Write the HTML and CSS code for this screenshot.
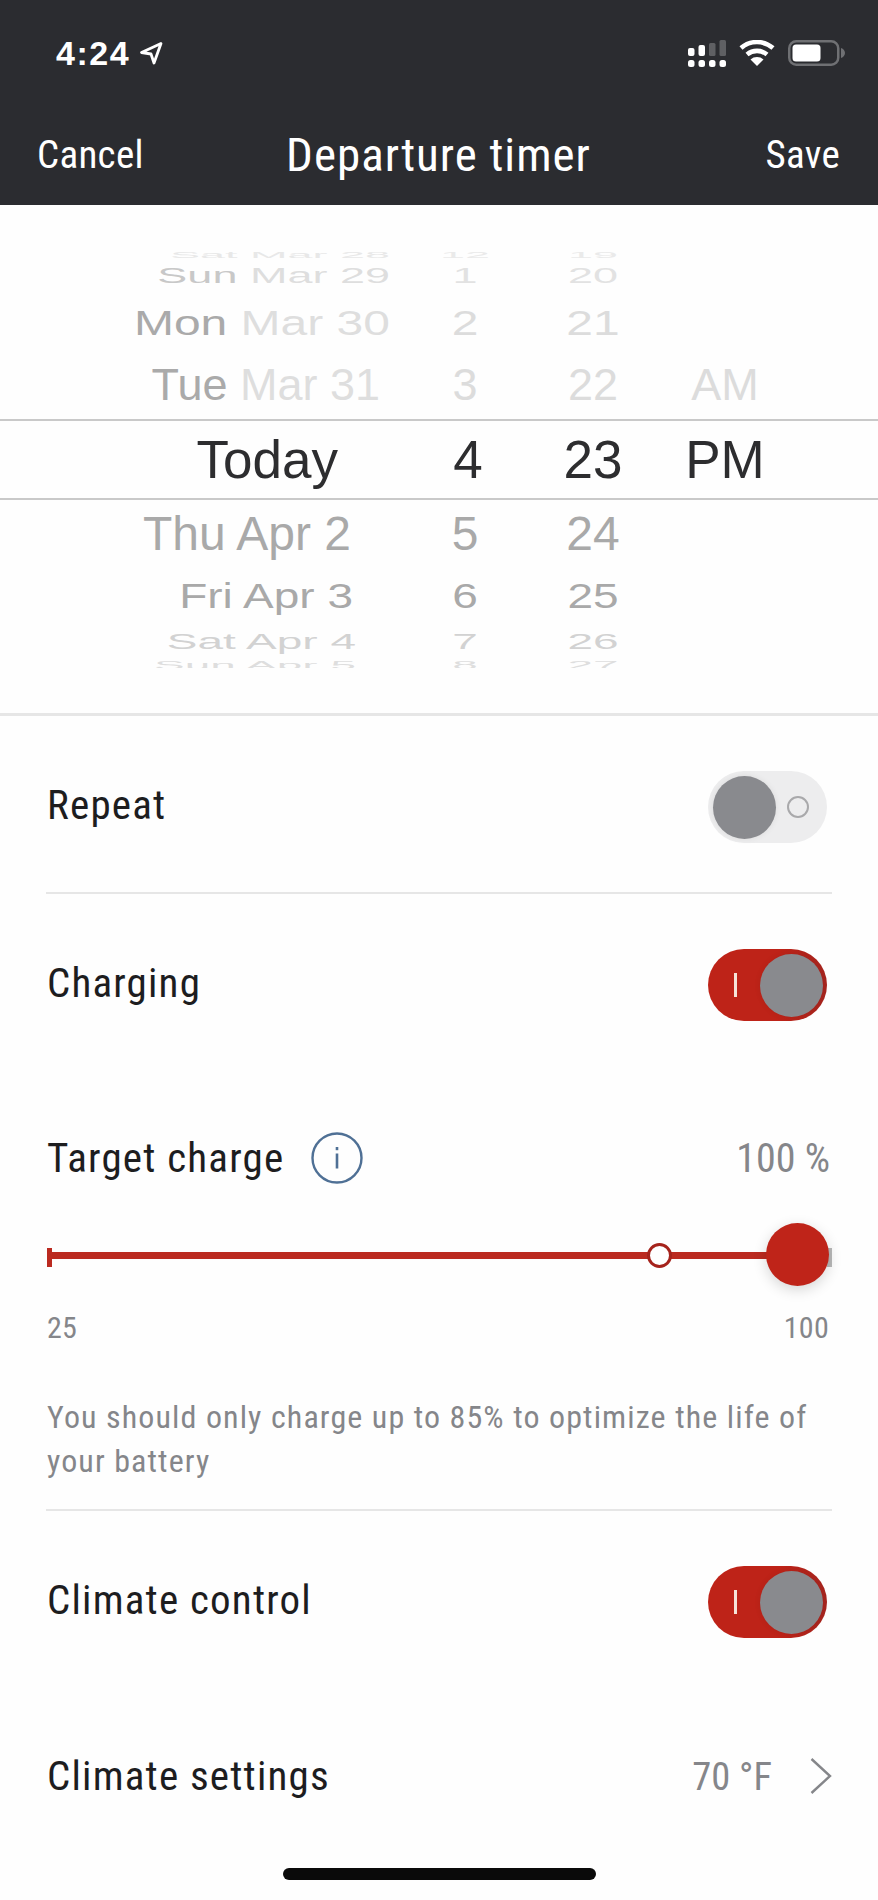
FILE: index.html
```html
<!DOCTYPE html>
<html lang="en">
<head>
    <meta charset="UTF-8">
    <meta name="viewport" content="width=device-width, initial-scale=1.0">
    <title>Departure timer</title>
    <link rel="stylesheet" href="styles.css">
</head>
<body>
    <header class="top">
        <div class="status">
            <div class="status-time">
                <span>4:24</span>
                <svg width="24" height="24" viewBox="0 0 24 24"><path d="M22 2.500 2.500 11.500l9.500 1.500 3 9z" fill="none" stroke="#fff" stroke-width="2.800" stroke-linejoin="round"/></svg>
            </div>
            <div class="status-icons">
                <svg width="38" height="27" viewBox="0 0 38 27">
                    <g fill="#fff">
                        <rect x="0" y="8" width="6.500" height="8" rx="2"/><rect x="10.500" y="5" width="6.500" height="11" rx="2"/>
                        <rect x="0" y="20" width="6.500" height="7" rx="2.500"/><rect x="10.500" y="20" width="6.500" height="7" rx="2.500"/>
                        <rect x="21" y="20" width="6.500" height="7" rx="2.500"/><rect x="31.500" y="20" width="6.500" height="7" rx="2.500"/>
                    </g>
                    <g fill="#5f6063"><rect x="21" y="3" width="6.500" height="13" rx="1.500"/><rect x="31.500" y="0" width="6.500" height="16" rx="1.500"/></g>
                </svg>
                <svg width="36" height="26" viewBox="0 0 36 26">
                    <path d="M18 26 11.500 19.500a10 10 0 0 1 13 0z" fill="#fff"/>
                    <path d="M8 14.500a15.500 15.500 0 0 1 20 0M2 8a24.500 24.500 0 0 1 32 0" fill="none" stroke="#fff" stroke-width="4.600"/>
                </svg>
                <svg width="57" height="26" viewBox="0 0 57 26">
                    <rect x="1.250" y="1.250" width="49" height="23.500" rx="7" fill="none" stroke="#6f7073" stroke-width="2.500"/>
                    <rect x="4.500" y="4.500" width="28" height="17" rx="3.500" fill="#fff"/>
                    <path d="M53 8c2.500 .8 4 2.800 4 5s-1.500 4.200-4 5z" fill="#6f7073"/>
                </svg>
            </div>
        </div>
        <nav class="nav">
            <a class="nav-link">Cancel</a>
            <h1 class="nav-title">Departure timer</h1>
            <a class="nav-link nav-save">Save</a>
        </nav>
    </header>

    <section class="picker">
        <div class="wheel">
            <div class="wheel-row edge-top"><div class="date date-edge"><span class="day">Sat</span> Mar 28</div><div class="num">12</div><div class="num">19</div><div class="num"></div></div>
            <div class="wheel-row far-top"><div class="date date-far"><span class="day">Sun</span> Mar 29</div><div class="num">1</div><div class="num">20</div><div class="num"></div></div>
            <div class="wheel-row mid-top"><div class="date date-far"><span class="day">Mon</span> Mar 30</div><div class="num">2</div><div class="num">21</div><div class="num"></div></div>
            <div class="wheel-row near-top"><div class="date date-tue"><span class="day">Tue</span> Mar 31</div><div class="num">3</div><div class="num">22</div><div class="num">AM</div></div>
            <div class="wheel-row selected"><div class="date date-today">Today</div><div class="num num-hour">4</div><div class="num">23</div><div class="num">PM</div></div>
            <div class="wheel-row near-bottom"><div class="date date-thu">Thu Apr 2</div><div class="num">5</div><div class="num">24</div><div class="num"></div></div>
            <div class="wheel-row mid-bottom"><div class="date date-fri">Fri Apr 3</div><div class="num">6</div><div class="num">25</div><div class="num"></div></div>
            <div class="wheel-row far-bottom"><div class="date date-sat">Sat Apr 4</div><div class="num">7</div><div class="num">26</div><div class="num"></div></div>
            <div class="wheel-row edge-bottom"><div class="date date-sat">Sun Apr 5</div><div class="num">8</div><div class="num">27</div><div class="num"></div></div>
        </div>
    </section>

    <main class="settings">
        <div class="row row-repeat">
            <span class="row-label">Repeat</span>
            <div class="toggle">
                <span class="toggle-knob"></span>
                <span class="toggle-ring"></span>
            </div>
        </div>

        <div class="row row-charging">
            <span class="row-label">Charging</span>
            <div class="toggle toggle-on">
                <span class="toggle-bar"></span>
                <span class="toggle-knob"></span>
            </div>
        </div>

        <div class="charge">
            <div class="charge-head">
                <span class="row-label">Target charge</span>
                <svg class="info" width="52" height="52" viewBox="0 0 52 52">
                    <circle cx="26" cy="26" r="24.500" fill="none" stroke="#4f7095" stroke-width="2.400"/>
                    <rect x="24.700" y="15" width="2.600" height="3.200" fill="#4f7095"/>
                    <rect x="24.700" y="21.500" width="2.600" height="15" fill="#4f7095"/>
                </svg>
                <span class="charge-value">100 %</span>
            </div>
            <div class="slider">
                <span class="slider-track"></span>
                <span class="slider-start"></span>
                <span class="slider-end"></span>
                <span class="slider-mark"></span>
                <span class="slider-thumb"></span>
            </div>
            <div class="slider-labels">
                <span>25</span>
                <span>100</span>
            </div>
            <p class="note">You should only charge up to 85% to optimize the life of your battery</p>
        </div>

        <div class="row row-climate">
            <span class="row-label">Climate control</span>
            <div class="toggle toggle-on">
                <span class="toggle-bar"></span>
                <span class="toggle-knob"></span>
            </div>
        </div>

        <div class="row row-settings">
            <span class="row-label">Climate settings</span>
            <div class="row-value">
                <span>70 °F</span>
                <svg width="22" height="36" viewBox="0 0 22 36"><path d="M1.500 1 20 18 1.500 35" fill="none" stroke="#85868a" stroke-width="2.400"/></svg>
            </div>
        </div>
    </main>

    <div class="home-bar"></div>
</body>
</html>
```

FILE: styles.css
```css
body {
    margin: 0;
    width: 878px;
    height: 1900px;
    overflow: hidden;
    background: #fefefe;
    color: #1d1d1f;
    font-family: Roboto, sans-serif;
    font-stretch: 75%;
    font-weight: 370;
}

/* top bar */
.top {
    height: 205px;
    background: #2b2c30;
    color: #fff;
}
.status {
    height: 108px;
    padding: 0 33px 2px 56px;
    display: flex;
    justify-content: space-between;
    align-items: center;
    box-sizing: border-box;
}
.status-time {
    display: flex;
    align-items: center;
    gap: 9px;
    font-family: "Liberation Sans", sans-serif;
    font-weight: bold;
    font-size: 34px;
    letter-spacing: 1.5px;
}
.status-icons {
    display: flex;
    align-items: center;
    gap: 13px;
}
.nav {
    height: 97px;
    padding: 0 38px 4px 37px;
    box-sizing: border-box;
    display: grid;
    grid-template-columns: 1fr auto 1fr;
    align-items: center;
}
.nav-link {
    font-size: 39px;
    letter-spacing: 0.3px;
}
.nav-save {
    justify-self: end;
}
.nav-title {
    margin: 0;
    font-size: 47px;
    font-weight: 370;
    letter-spacing: 1px;
}

/* date and time wheel */
.picker {
    height: 511px;
    padding-top: 46px;
    box-sizing: border-box;
    border-bottom: 3px solid #e6e6e6;
}
.wheel {
    height: 417px;
    overflow: hidden;
}
.wheel-row {
    display: grid;
    grid-template-columns: 420px 90px 166px 98px;
    grid-template-rows: minmax(0, 1fr);
    align-items: center;
    justify-items: center;
    font-family: "Liberation Sans", sans-serif;
    font-stretch: normal;
    font-weight: normal;
    font-size: 45px;
    color: #dcdcdc;
}
.date {
    justify-self: end;
    white-space: nowrap;
    color: #dedede;
}
.day {
    color: #aaa;
}
.edge-top {
    height: 7px;
    transform: scaleY(0.2);
    color: #eaeaea;
}
.edge-top .date,
.edge-top .day {
    color: #e8e8e8;
}
.far-top {
    height: 36px;
    transform: scaleY(0.49);
    color: #e2e2e2;
}
.far-top .day {
    color: #c8c8c8;
}
.mid-top {
    height: 56px;
    font-size: 48px;
    transform: scaleY(0.74);
}
.near-top {
    height: 69px;
}
.selected {
    height: 81px;
    box-sizing: border-box;
    border-top: 2px solid #c9c9c9;
    border-bottom: 2px solid #c9c9c9;
    font-size: 53px;
    color: #2d2d2f;
}
.num-hour {
    padding-left: 6px;
}
.near-bottom {
    height: 66px;
    font-size: 48px;
    color: #a9a9a9;
}
.mid-bottom {
    height: 60px;
    font-size: 46px;
    transform: scaleY(0.76);
    color: #a9a9a9;
}
.far-bottom {
    height: 30px;
    font-size: 46px;
    transform: scaleY(0.49);
    color: #d2d2d2;
}
.edge-bottom {
    height: 18px;
    font-size: 46px;
    transform: scaleY(0.22);
    color: #dedede;
}
.date-edge,
.date-far {
    padding-right: 30px;
}
.date-tue {
    padding-right: 40px;
}
.date-today {
    padding-right: 82px;
    color: #2d2d2f;
}
.date-thu,
.date-fri,
.date-sat {
    color: inherit;
}
.date-thu {
    padding-right: 69px;
}
.date-fri {
    padding-right: 67px;
}
.date-sat {
    padding-right: 64px;
}

/* setting rows */
.settings {
    margin: 0 46px;
}
.row {
    display: flex;
    justify-content: space-between;
    align-items: center;
    padding-left: 1px;
}
.row-label {
    font-size: 41px;
    letter-spacing: 1.2px;
}
.row .row-label {
    padding-bottom: 4px;
}
.row-repeat {
    height: 178px;
    padding-top: 6px;
    box-sizing: border-box;
    border-bottom: 2px solid #e6e6e6;
}
.row-charging {
    height: 182px;
}
.row-climate {
    height: 182px;
}
.row-settings {
    height: 166px;
}
.row-settings .row-label {
    padding-bottom: 0;
}
.row-value {
    display: flex;
    align-items: center;
    gap: 38px;
    font-size: 38.500px;
    color: #85868a;
}
.toggle {
    width: 119px;
    height: 72px;
    margin-right: 5px;
    padding: 0 5px;
    box-sizing: border-box;
    border-radius: 36px;
    background: #ededee;
    display: flex;
    align-items: center;
    gap: 11px;
}
.toggle-on {
    background: linear-gradient(to right, #be2318 62%, #a6251f);
    gap: 0;
    justify-content: space-between;
    padding: 0 4px 0 26px;
}
.toggle-knob {
    width: 63px;
    height: 63px;
    border-radius: 50%;
    background: #898a8e;
    box-shadow: 0 0 6px rgba(0, 0, 0, 0.08);
}
.toggle-ring {
    width: 22px;
    height: 22px;
    box-sizing: border-box;
    border: 2px solid #a9a9ab;
    border-radius: 50%;
}
.toggle-bar {
    width: 3px;
    height: 24px;
    background: #f6e3d8;
}

/* target charge */
.charge {
    padding-top: 52px;
    border-bottom: 2px solid #e6e6e6;
}
.charge-head {
    display: flex;
    align-items: center;
    height: 60px;
    padding: 0 2px 0 1px;
}
.info {
    margin-left: 27px;
}
.charge-value {
    margin-left: auto;
    font-size: 40px;
    color: #85868a;
}
.slider {
    position: relative;
    height: 64px;
    margin-top: 35px;
}
.slider-track {
    position: absolute;
    left: 1px;
    right: 3px;
    top: 29px;
    height: 7px;
    background: #bb2a20;
}
.slider-start,
.slider-end {
    position: absolute;
    top: 25px;
    width: 5px;
    height: 19px;
    background: #bb2a20;
}
.slider-start {
    left: 1px;
}
.slider-end {
    right: 0;
    background: #b9b9b9;
}
.slider-mark {
    position: absolute;
    left: 601px;
    top: 20px;
    width: 25px;
    height: 25px;
    box-sizing: border-box;
    border: 3px solid #a5231c;
    border-radius: 50%;
    background: #fff;
}
.slider-thumb {
    position: absolute;
    left: 720px;
    top: 0;
    width: 63px;
    height: 63px;
    border-radius: 50%;
    background: #bf2419;
    box-shadow: 0 4px 14px rgba(0, 0, 0, 0.16);
}
.slider-labels {
    display: flex;
    justify-content: space-between;
    height: 40px;
    margin-top: 21px;
    padding: 0 3px 0 1px;
    line-height: 40px;
    font-size: 30px;
    letter-spacing: 0.3px;
    color: #85868a;
}
.note {
    margin: 47px 0 26px;
    padding-left: 1px;
    font-size: 32px;
    line-height: 44px;
    letter-spacing: 1.100px;
    color: #85868a;
}

.home-bar {
    position: absolute;
    left: 283px;
    top: 1868px;
    width: 313px;
    height: 12px;
    border-radius: 6px;
    background: #0a0a0a;
}
```
